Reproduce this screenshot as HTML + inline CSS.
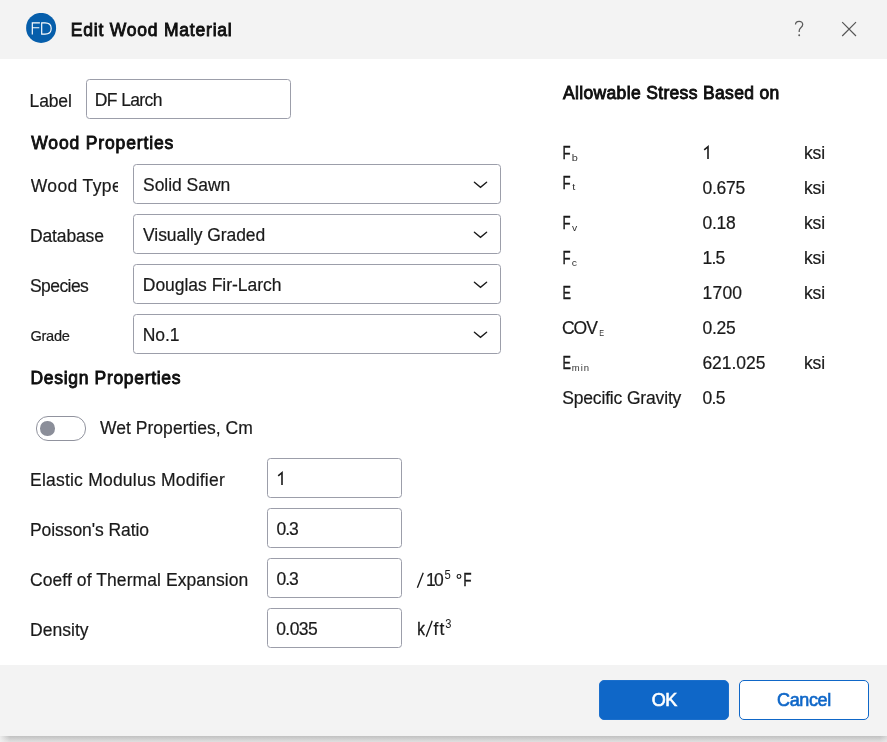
<!DOCTYPE html>
<html>
<head>
<meta charset="utf-8">
<title>Edit Wood Material</title>
<style>
*{box-sizing:border-box;margin:0;padding:0}
html,body{width:887px;height:742px;overflow:hidden;background:#fff}
body{font-family:"Liberation Sans",sans-serif;font-size:17.5px;color:#1a1a1a;position:relative}
.a{position:absolute}
#tx{position:absolute;left:0;top:0;width:887px;height:742px;will-change:transform}
.t{position:absolute;white-space:nowrap;line-height:20px;-webkit-text-stroke:0.2px #1a1a1a}
.b{color:#111;-webkit-text-stroke:0.85px #0c0c0c}
#titlebar{position:absolute;left:0;top:0;width:887px;height:59px;background:#f3f3f3}
#footer{position:absolute;left:0;top:665px;width:887px;height:71px;background:#f3f3f3}
#shadow{position:absolute;left:0;top:736px;width:887px;height:6px;background:linear-gradient(to right,rgba(243,243,243,.85) 0,rgba(243,243,243,0) 10px,rgba(243,243,243,0) 880px,rgba(243,243,243,.45) 887px),linear-gradient(to bottom,#c1c1c1 0%,#cbcbcb 33%,#d6d6d6 66%,#dfdfdf 100%)}
.box{position:absolute;background:#fff;border:1px solid #9c9eaa;border-radius:3.5px}
.btn{position:absolute;top:680px;width:130px;height:40px;border-radius:5px}
</style>
</head>
<body>
<div id="titlebar"></div>
<div id="footer"></div>
<div id="shadow"></div>

<svg class="a" style="left:26px;top:13px" width="31" height="31" viewBox="0 0 31 31">
<circle cx="15.1" cy="14.9" r="15" fill="#065eab"/>
<path d="M6.3 21.5V9.9h7.6M6.3 14.7h7" fill="none" stroke="#fff" stroke-width="1.15"/>
<path d="M15.7 9.9v11.2h3.3c3.7 0 6.2-2.2 6.2-5.6S22.7 9.9 19 9.9z" fill="none" stroke="#fff" stroke-width="1.15"/>
</svg>

<svg class="a" style="left:793px;top:19px" width="12" height="19" viewBox="0 0 12 19">
<path d="M2.5 5.6C2.5 3.5 4.1 2.4 6.1 2.4c2.1 0 3.6 1.2 3.6 3.1 0 1.5-.8 2.3-1.9 3.2C6.7 9.7 6.2 10.4 6.2 11.7v1.2" fill="none" stroke="#5a5a5a" stroke-width="1.25"/>
<circle cx="6.2" cy="16.3" r="0.95" fill="#5a5a5a"/>
</svg>
<svg class="a" style="left:841px;top:20.5px" width="16" height="16" viewBox="0 0 16 16">
<path d="M1.2 1.2L15 15M15 1.2L1.2 15" stroke="#555" stroke-width="1.2" fill="none"/>
</svg>

<div class="box" style="left:86px;top:79px;width:205px;height:40px"></div>
<div class="box" style="left:133px;top:164px;width:368px;height:40px"></div>
<div class="box" style="left:133px;top:214px;width:368px;height:40px"></div>
<div class="box" style="left:133px;top:264px;width:368px;height:40px"></div>
<div class="box" style="left:133px;top:314px;width:368px;height:40px"></div>
<div class="box" style="left:267px;top:458px;width:135px;height:40px"></div>
<div class="box" style="left:267px;top:508px;width:135px;height:40px"></div>
<div class="box" style="left:267px;top:558px;width:135px;height:40px"></div>
<div class="box" style="left:267px;top:608px;width:135px;height:40px"></div>

<svg class="a" style="left:473px;top:180px" width="15" height="10" viewBox="0 0 15 10"><path d="M1.4 2.2L7.5 7.3L13.6 2.2" stroke="#1a1a1a" stroke-width="1.35" fill="none" stroke-linecap="round" stroke-linejoin="miter"/></svg><svg class="a" style="left:473px;top:230px" width="15" height="10" viewBox="0 0 15 10"><path d="M1.4 2.2L7.5 7.3L13.6 2.2" stroke="#1a1a1a" stroke-width="1.35" fill="none" stroke-linecap="round" stroke-linejoin="miter"/></svg><svg class="a" style="left:473px;top:280px" width="15" height="10" viewBox="0 0 15 10"><path d="M1.4 2.2L7.5 7.3L13.6 2.2" stroke="#1a1a1a" stroke-width="1.35" fill="none" stroke-linecap="round" stroke-linejoin="miter"/></svg><svg class="a" style="left:473px;top:330px" width="15" height="10" viewBox="0 0 15 10"><path d="M1.4 2.2L7.5 7.3L13.6 2.2" stroke="#1a1a1a" stroke-width="1.35" fill="none" stroke-linecap="round" stroke-linejoin="miter"/></svg>

<div class="a" style="left:36px;top:415.5px;width:49.5px;height:25px;border:1px solid #91939e;border-radius:12px;background:#fff"></div>
<div class="a" style="left:40px;top:421px;width:14.5px;height:14.5px;border-radius:50%;background:#8b8e99"></div>

<svg class="a" style="left:410px;top:565px" width="70" height="80" viewBox="410 565 70 80">
<path d="M417.35 587.8L423.25 572.8M426.2 636.7L432.2 620.7" stroke="#1a1a1a" stroke-width="1.35" fill="none"/>
<circle cx="459" cy="576.4" r="1.9" stroke="#1a1a1a" stroke-width="1.15" fill="none"/>
</svg>
<svg class="a" style="left:275px;top:468px" width="12" height="20" viewBox="275 468 12 20"><path d="M278.2 475.8L282 472.7V485" stroke="#1a1a1a" stroke-width="1.6" fill="none"/></svg>
<svg class="a" style="left:701px;top:142px" width="12" height="20" viewBox="701 142 12 20"><path d="M704.2 149.8L708 146.7V159" stroke="#1a1a1a" stroke-width="1.6" fill="none"/></svg>

<div class="btn" style="left:599px;background:#0f67c8;border:1px solid #1b6fcc"></div>
<div class="btn" style="left:739px;background:#fff;border:1px solid #0f67c8"></div>

<div id="tx">
<div class="t b" id="t_title" style="left:70.8px;top:20px;letter-spacing:0.79px">Edit Wood Material</div>
<div class="t" id="t_label" style="left:29.6px;top:91px;letter-spacing:-0.15px">Label</div>
<div class="t" id="t_dfl" style="left:94.8px;top:90px;letter-spacing:-0.62px">DF Larch</div>
<div class="t b" id="t_wp" style="left:31.3px;top:133px;letter-spacing:0.85px">Wood Properties</div>
<div class="t" id="t_wt" style="left:30.8px;top:176px;letter-spacing:0.37px;width:87.2px;overflow:hidden">Wood Type</div>
<div class="t" id="t_ss" style="left:143px;top:175px;letter-spacing:-0.03px">Solid Sawn</div>
<div class="t" id="t_db" style="left:30px;top:226px;letter-spacing:-0.14px">Database</div>
<div class="t" id="t_vg" style="left:143.1px;top:225px;letter-spacing:-0.08px">Visually Graded</div>
<div class="t" id="t_sp" style="left:30px;top:276px;letter-spacing:-0.58px">Species</div>
<div class="t" id="t_dfla" style="left:142.8px;top:275px;letter-spacing:-0.03px">Douglas Fir-Larch</div>
<div class="t" id="t_gr" style="left:30.4px;top:326px;font-size:14.6px;letter-spacing:-0.26px">Grade</div>
<div class="t" id="t_no1" style="left:142.8px;top:325px;letter-spacing:-0.07px">No.1</div>
<div class="t b" id="t_dp" style="left:30.5px;top:368px;letter-spacing:0.68px">Design Properties</div>
<div class="t" id="t_wet" style="left:100.1px;top:418px;letter-spacing:0.02px">Wet Properties, Cm</div>
<div class="t" id="t_emm" style="left:30px;top:470px;letter-spacing:0.22px">Elastic Modulus Modifier</div>
<div class="t" id="t_pr" style="left:30px;top:520px;letter-spacing:-0.07px">Poisson's Ratio</div>
<div class="t" id="t_v2" style="left:276.5px;top:519px;letter-spacing:-1.03px">0.3</div>
<div class="t" id="t_cte" style="left:30px;top:570px;letter-spacing:0.08px">Coeff of Thermal Expansion</div>
<div class="t" id="t_v3" style="left:276.5px;top:569px;letter-spacing:-1.03px">0.3</div>
<div class="t" id="t_u1a" style="left:426px;top:570px;letter-spacing:-1.75px">10</div>
<div class="t" id="t_u1s" style="left:444px;top:565px;font-size:12px;-webkit-text-stroke:0;transform:translateX(0.43px) scaleX(0.939);transform-origin:0 0">5</div>
<div class="t" id="t_u1b" style="left:463px;top:570px;transform:translateX(0.23px) scaleX(0.777);transform-origin:0 0;-webkit-text-stroke:0.42px #1a1a1a">F</div>
<div class="t" id="t_den" style="left:30px;top:620px;letter-spacing:0.04px">Density</div>
<div class="t" id="t_v4" style="left:276.2px;top:619px;letter-spacing:-0.56px">0.035</div>
<div class="t" id="t_u2a" style="left:417px;top:619px;transform:translateX(0.13px) scaleX(0.865);transform-origin:0 0;-webkit-text-stroke:0.42px #1a1a1a">k</div>
<div class="t" id="t_u2b" style="left:433.6px;top:619px;letter-spacing:1.1px">ft</div>
<div class="t" id="t_u2s" style="left:445px;top:614px;font-size:12px;-webkit-text-stroke:0;transform:translateX(0.24px) scaleX(0.922);transform-origin:0 0">3</div>
<div class="t b" id="t_as" style="left:563px;top:83px;letter-spacing:0.34px">Allowable Stress Based on</div>
<div class="t" id="t_fb" style="left:562px;top:143px;transform:translateX(0.56px) scaleX(0.754);transform-origin:0 0;-webkit-text-stroke:0.42px #1a1a1a">F</div>
<div class="t" id="t_fbs" style="left:571px;top:148px;font-size:9.5px;color:#333;-webkit-text-stroke:0;transform:translateX(0.79px) scaleX(1.15);transform-origin:0 0">b</div>
<div class="t" id="t_fbu" style="left:804px;top:143px;letter-spacing:-0.18px">ksi</div>
<div class="t" id="t_ft" style="left:562px;top:173px;transform:translateX(0.56px) scaleX(0.754);transform-origin:0 0;-webkit-text-stroke:0.42px #1a1a1a">F</div>
<div class="t" id="t_fts" style="left:572px;top:177px;font-size:9.5px;color:#333;-webkit-text-stroke:0;transform:translateX(0.22px) scaleX(1.15);transform-origin:0 0">t</div>
<div class="t" id="t_ftv" style="left:702.4px;top:178px;letter-spacing:-0.21px">0.675</div>
<div class="t" id="t_ftu" style="left:804px;top:178px;letter-spacing:-0.18px">ksi</div>
<div class="t" id="t_fv" style="left:562px;top:213px;transform:translateX(0.56px) scaleX(0.754);transform-origin:0 0;-webkit-text-stroke:0.42px #1a1a1a">F</div>
<div class="t" id="t_fvs" style="left:572px;top:218px;font-size:9.5px;color:#333;-webkit-text-stroke:0;transform:translateX(0px) scaleX(1.095);transform-origin:0 0">v</div>
<div class="t" id="t_fvv" style="left:702.4px;top:213px;letter-spacing:-0.2px">0.18</div>
<div class="t" id="t_fvu" style="left:804px;top:213px;letter-spacing:-0.18px">ksi</div>
<div class="t" id="t_fc" style="left:562px;top:248px;transform:translateX(0.56px) scaleX(0.754);transform-origin:0 0;-webkit-text-stroke:0.42px #1a1a1a">F</div>
<div class="t" id="t_fcs" style="left:571px;top:253px;font-size:9.5px;color:#333;-webkit-text-stroke:0;transform:translateX(0.75px) scaleX(1.1);transform-origin:0 0">c</div>
<div class="t" id="t_fcv" style="left:702.6px;top:248px;letter-spacing:-0.8px">1.5</div>
<div class="t" id="t_fcu" style="left:804px;top:248px;letter-spacing:-0.18px">ksi</div>
<div class="t" id="t_e" style="left:562px;top:283px;transform:translateX(0.49px) scaleX(0.72);transform-origin:0 0;-webkit-text-stroke:0.42px #1a1a1a">E</div>
<div class="t" id="t_ev" style="left:702.6px;top:283px;letter-spacing:0.17px">1700</div>
<div class="t" id="t_eu" style="left:804px;top:283px;letter-spacing:-0.18px">ksi</div>
<div class="t" id="t_cov" style="left:562px;top:318px;letter-spacing:-1.03px">COV</div>
<div class="t" id="t_covs" style="left:599px;top:323px;font-size:9.5px;color:#333;-webkit-text-stroke:0;transform:translateX(0.23px) scaleX(0.762);transform-origin:0 0">E</div>
<div class="t" id="t_covv" style="left:702.4px;top:318px;letter-spacing:-0.2px">0.25</div>
<div class="t" id="t_emin" style="left:562px;top:353px;transform:translateX(0.49px) scaleX(0.72);transform-origin:0 0;-webkit-text-stroke:0.42px #1a1a1a">E</div>
<div class="t" id="t_emins" style="left:571.8px;top:358px;font-size:9.5px;letter-spacing:1px;color:#333;-webkit-text-stroke:0">min</div>
<div class="t" id="t_eminv" style="left:702.4px;top:353px;letter-spacing:-0.04px">621.025</div>
<div class="t" id="t_eminu" style="left:804px;top:353px;letter-spacing:-0.18px">ksi</div>
<div class="t" id="t_sg" style="left:562.2px;top:388px;letter-spacing:-0.16px">Specific Gravity</div>
<div class="t" id="t_sgv" style="left:702.4px;top:388px;letter-spacing:-0.68px">0.5</div>
<div class="t" id="t_ok" style="left:651.8px;top:690px;font-size:18px;letter-spacing:-0.65px;color:#ffffff;-webkit-text-stroke:0.6px">OK</div>
<div class="t" id="t_cancel" style="left:777px;top:690px;font-size:18px;letter-spacing:-0.37px;color:#0f67c8;-webkit-text-stroke:0.6px">Cancel</div>
</div>
</body>
</html>
